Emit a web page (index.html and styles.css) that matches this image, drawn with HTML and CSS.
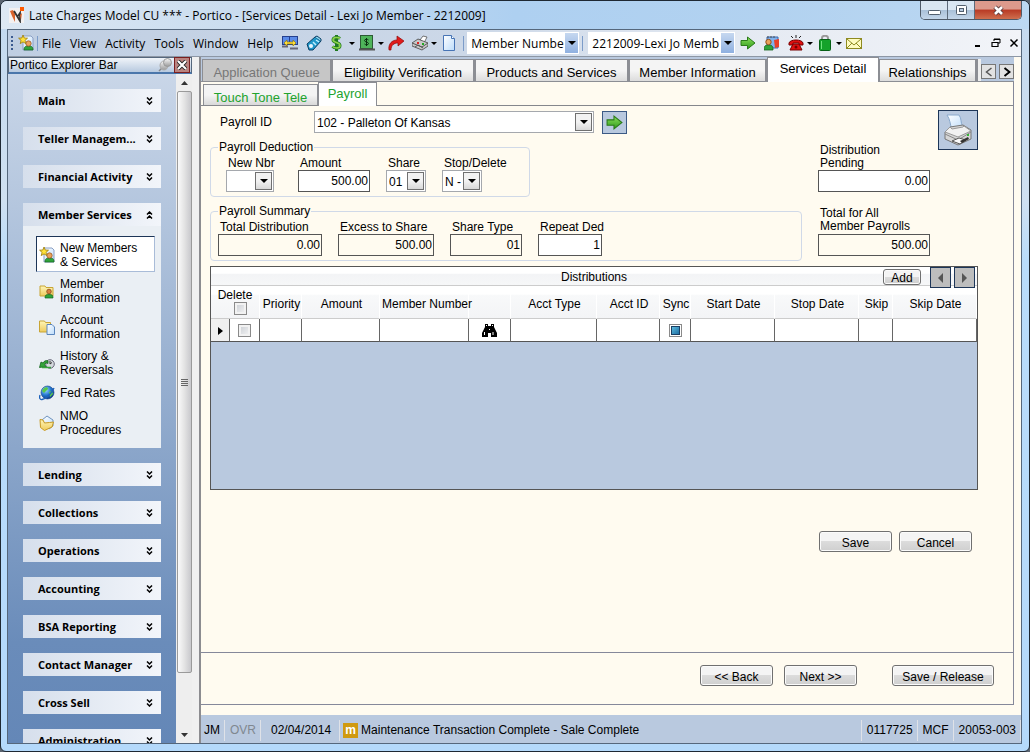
FILE: index.html
```html
<!DOCTYPE html>
<html lang="en">
<head>
<meta charset="utf-8">
<title>Portico - Services Detail</title>
<link rel="stylesheet" href="styles.css">
</head>
<body>
<svg class="defs" aria-hidden="true">
  <defs>
    <linearGradient id="green" x1="0" y1="0" x2="0" y2="1"><stop offset="0" stop-color="#8be05a"/><stop offset="1" stop-color="#2f9a1c"/></linearGradient>
    <linearGradient id="paper" x1="0" y1="0" x2="1" y2="1"><stop offset="0" stop-color="#ffffff"/><stop offset="1" stop-color="#bcdcfb"/></linearGradient>
    <linearGradient id="folder" x1="0" y1="0" x2="0" y2="1"><stop offset="0" stop-color="#fff6b8"/><stop offset="1" stop-color="#eecb5c"/></linearGradient>
    <linearGradient id="grey" x1="0" y1="0" x2="0" y2="1"><stop offset="0" stop-color="#f8f8f8"/><stop offset="1" stop-color="#9a9a9a"/></linearGradient>
    <radialGradient id="globe" cx=".35" cy=".3" r=".8"><stop offset="0" stop-color="#a8ddff"/><stop offset=".5" stop-color="#2579d0"/><stop offset="1" stop-color="#0a2c78"/></radialGradient>
  </defs>
  <symbol id="star-person" viewBox="0 0 16 16">
    <path d="M5 1h8l2 2v12H5z" fill="url(#paper)" stroke="#8a9fc4"/>
    <path d="M6 15c0-3 1-4 4.500-4s4.500 1 4.500 4z" fill="#2fa33a" stroke="#16641f" stroke-width=".7"/>
    <circle cx="10.500" cy="8.500" r="2.700" fill="#e9a25c" stroke="#95521c" stroke-width=".7"/>
    <path d="M5 0l1.300 3 3.200.2-2.500 2.200.9 3.200L5 6.900 2.200 8.600l.9-3.200L.6 3.200 3.800 3z" fill="#ffe23a" stroke="#9a7a08" stroke-width=".8"/>
  </symbol>
  <symbol id="folder-person" viewBox="0 0 16 16">
    <path d="M1 3h5l1 1.500h7V13H1z" fill="url(#folder)" stroke="#c8a534"/>
    <path d="M6 15c0-3 1-3.500 4-3.500s4 .5 4 3.500z" fill="#2fa33a" stroke="#16641f" stroke-width=".7"/>
    <circle cx="10" cy="8.500" r="2.300" fill="#d9803c" stroke="#7b3f14" stroke-width=".7"/>
  </symbol>
  <symbol id="folder-page" viewBox="0 0 16 16">
    <path d="M.5 2h5l1 1.500h5V13H.5z" fill="url(#folder)" stroke="#c8a534"/>
    <path d="M8 5.500h5l2.500 2.500v7.500H8z" fill="url(#paper)" stroke="#5b86bd"/>
  </symbol>
  <symbol id="history" viewBox="0 0 16 16">
    <circle cx="11" cy="9" r="4.300" fill="#d4d9dd" stroke="#667"/>
    <path d="M11 6v3l2-1.500" fill="none" stroke="#333"/>
    <path d="M9 6c-2-1-4 0-5 2L2 7 .5 12.500 7 11.500 5.500 9.500C6 8 7.500 7.500 9 8.500z" fill="#34a53a" stroke="#14641d" stroke-width=".8"/>
    <path d="M3 12.500h9" stroke="#34a53a" stroke-width="1.500"/>
  </symbol>
  <symbol id="globe-icon" viewBox="0 0 16 16">
    <circle cx="8.500" cy="7.500" r="6.500" fill="url(#globe)" stroke="#123f8a" stroke-width=".6"/>
    <path d="M5 3c2-1 4-1 4 1L7 6 5 8 3 6zM10 7l3-1 1 3-3 3z" fill="#58c84a"/>
    <path d="M1 10c-1 3 0 5 2 4.500 4-1 10-6 12-11.500" fill="none" stroke="#1d62bb" stroke-width="1.300"/>
  </symbol>
  <symbol id="folder-open" viewBox="0 0 16 16">
    <path d="M3 5l5-4 6 4v6l-4 3z" fill="url(#paper)" stroke="#6f93bd"/>
    <path d="M1 4.500l3 .5 1.500 3 5-.5L14.500 7 13 12l-7.500 3.500-4-3z" fill="url(#folder)" stroke="#c89a24"/>
  </symbol>
  <symbol id="arrow-right" viewBox="0 0 16 16">
    <path d="M1 5.500h6.500V2L15 8l-7.500 6v-3.500H1z" fill="url(#green)" stroke="#2b7a1a"/>
  </symbol>
</svg>

<div class="window">
  <header class="titlebar">
    <svg class="app-icon" viewBox="0 0 16 16"><rect y="1" width="15" height="15" fill="#f3f1f1"/><path d="M1 4l3-1 2 4v8L3 9z" fill="#d9632c"/><path d="M5 4l6 10V6l-2 3" fill="none" stroke="#333" stroke-width="1.800"/><path d="M11 8l2-2-1 7z" fill="#d9632c"/><rect x="11" width="4" height="4" fill="#ff5a00"/></svg>
    <h1 class="title">Late Charges Model CU *** - Portico - [Services Detail - Lexi Jo Member - 2212009]</h1>
    <div class="win-buttons">
      <button class="win-btn" aria-label="Minimize"><svg width="13" height="13" viewBox="0 0 13 13"><rect x=".5" y="6.500" width="12" height="4" rx="1" fill="#fff" stroke="#53606e"/></svg></button>
      <button class="win-btn" aria-label="Restore"><svg width="13" height="13" viewBox="0 0 13 13"><rect x="1.500" y="1.500" width="10" height="9" rx="1" fill="#fff" stroke="#53606e"/><rect x="4.500" y="4.500" width="4" height="3" fill="#b8cbe0" stroke="#53606e"/></svg></button>
      <button class="win-btn win-close" aria-label="Close"><svg width="13" height="13" viewBox="0 0 13 13"><path d="M3 3l7 7M10 3l-7 7" stroke="#5a3a3a" stroke-width="4.500"/><path d="M3 3l7 7M10 3l-7 7" stroke="#fff" stroke-width="2.600"/></svg></button>
    </div>
  </header>

  <div class="client">
    <div class="menubar">
      <span class="grip"></span>
      <button class="tool" aria-label="New member"><svg viewBox="0 0 16 16"><use href="#star-person"/></svg></button>
      <span class="sep"></span>
      <nav class="menu">
        <button>File</button><button>View</button><button>Activity</button><button>Tools</button><button>Window</button><button>Help</button>
      </nav>
      <div class="tools">
        <button class="tool" aria-label="Connections"><svg viewBox="0 0 16 16"><rect x=".5" y="1.500" width="8" height="8" fill="#5b8be8" stroke="#25408e"/><rect x="7.500" y="1.500" width="8" height="8" fill="#5b8be8" stroke="#25408e"/><path d="M8 13.500h8M0 11.500h6" stroke="#667" stroke-width="2"/><path d="M2 8l3-3v2h6V5l3 3-3 3V9H5v2z" fill="#ffe03a" stroke="#8a6d00" stroke-width=".6"/></svg></button>
        <button class="tool" aria-label="Calculator"><svg viewBox="0 0 16 16"><path d="M1 9l8-7 6 4-8 9H3z" fill="#1f97c9" stroke="#0b3f66"/><path d="M9 2l2-1 4 3v2" fill="#8bd8f2" stroke="#0b3f66"/><circle cx="5" cy="11" r="2" fill="#e7f6ff"/><path d="M7 7l3 3M10 5l3 2" stroke="#bfefff" stroke-width="1.500"/></svg></button>
        <button class="tool drop" aria-label="Money"><svg viewBox="0 0 16 16"><path d="M10 3.500C8 2 3 2 3 5s7 2 7 5.500-5.500 3-7.500 1M6.500 0v16" fill="none" stroke="#1f7a1f" stroke-width="3"/><path d="M10 3.500C8 2 3 2 3 5s7 2 7 5.500-5.500 3-7.500 1" fill="none" stroke="#8fd44a" stroke-width="1.600"/></svg></button>
        <button class="tool drop" aria-label="Cash"><svg viewBox="0 0 16 16"><rect x="1.500" y=".5" width="12" height="13" fill="#4fb45a" stroke="#2c5a35"/><path d="M0 14.500h16" stroke="#555" stroke-width="2"/><path d="M9.500 5c-1-1-4-1-4 .6s4 1.200 4 2.900-3 1.600-4 .5M7.500 3v8" fill="none" stroke="#0a3010"/></svg></button>
        <button class="tool" aria-label="Forward"><svg viewBox="0 0 16 16"><path d="M1 15c-1-6 3-10 8-10V1l7 5-6 5V8C6 8 3 10 3 15z" fill="#e21b1b" stroke="#8e0a0a" stroke-width=".7"/></svg></button>
        <button class="tool drop" aria-label="Print"><svg viewBox="0 0 16 16"><path d="M8 5l3-4 4 1-3 6z" fill="#fff" stroke="#555" stroke-width=".8"/><path d="M0 8l6-4 10 4v3l-6 4-10-4z" fill="#c8c8c8" stroke="#444" stroke-width=".8"/><path d="M0 8l10 4 6-4M3 12l3-2 5 3" fill="none" stroke="#555"/><path d="M5 8h2" stroke="#d22" stroke-width="2"/><path d="M10 9h2" stroke="#2a2" stroke-width="2"/></svg></button>
        <button class="tool" aria-label="Document"><svg viewBox="0 0 16 16"><path d="M2.500.5h8l3 3v12h-11z" fill="url(#paper)" stroke="#4774b5"/><path d="M10.500.5v3h3" fill="#fff" stroke="#4774b5"/></svg></button>
      </div>
      <span class="sep"></span>
      <span class="combo combo-flat search-type"><select aria-label="Search by"><option>Member Numbe</option></select><i></i></span>
      <span class="sep"></span>
      <span class="combo combo-flat search-member"><select aria-label="Member"><option>2212009-Lexi Jo Memb</option></select><i></i></span>
      <div class="tools">
        <button class="tool" aria-label="Go"><svg viewBox="0 0 16 16"><use href="#arrow-right"/></svg></button>
        <button class="tool" aria-label="Member notes"><svg viewBox="0 0 16 16"><path d="M3 2h11v11H3z" fill="#7fb2ee" stroke="#3a68ad"/><path d="M4 1v2M7 1v2M10 1v2" stroke="#555"/><path d="M10 5l5-1v8l-4 1z" fill="#e8402a"/><path d="M0 15c0-4 1-5 4.500-5S9 11 9 15z" fill="#2fa33a" stroke="#16641f" stroke-width=".8"/><circle cx="4.500" cy="7" r="2.700" fill="#e9a25c" stroke="#95521c"/></svg></button>
        <button class="tool drop" aria-label="Phone"><svg viewBox="0 0 16 16"><path d="M1 8c1-4 13-4 14 0v2h-4V8H5v2H1z" fill="#e01010" stroke="#700"/><path d="M5 9h6l3 6H2z" fill="#e01010" stroke="#700"/><path d="M5 3L3 1M8 3V0M11 3l2-2" stroke="#222"/><circle cx="8" cy="12" r="1.500" fill="#700"/></svg></button>
        <button class="tool drop" aria-label="Security"><svg viewBox="0 0 16 16"><path d="M5 5V3c0-3 6-3 6 0v2" fill="none" stroke="#999" stroke-width="2"/><rect x="2.500" y="4.500" width="11" height="11" rx="1" fill="#14a32a" stroke="#066016"/><path d="M4.500 6v8" stroke="#6fe27d"/></svg></button>
        <button class="tool" aria-label="Mail"><svg viewBox="0 0 16 16"><rect x=".5" y="3.500" width="15" height="10" fill="#fffcc0" stroke="#8e8a20"/><path d="M1 4l7 6 7-6M1 13l5-5M15 13l-5-5" fill="none" stroke="#8e8a20"/></svg></button>
      </div>
      <div class="mdi">
        <button aria-label="Minimize child"><svg width="10" height="10" viewBox="0 0 10 10"><path d="M2 8h5" stroke="#000" stroke-width="2"/></svg></button>
        <button aria-label="Restore child"><svg width="10" height="10" viewBox="0 0 10 10"><path d="M3 3V1h6v4H7M3 1.500h6" fill="none" stroke="#000"/><path d="M1 4.500h6v4H1zM1 4.500h6" fill="none" stroke="#000" stroke-width="1.200"/></svg></button>
        <button aria-label="Close child"><svg width="10" height="10" viewBox="0 0 10 10"><path d="M1.500 1.500l7 7M8.500 1.500l-7 7" stroke="#000" stroke-width="1.500"/></svg></button>
      </div>
    </div>

    <div class="workspace">
      <aside class="explorer">
        <div class="explorer-head">
          <h2>Portico Explorer Bar</h2>
          <button class="pin" aria-label="Pin"><svg width="14" height="14" viewBox="0 0 14 14"><path d="M1 13l4-4" stroke="#888" stroke-width="1.500"/><ellipse cx="6" cy="7.500" rx="4" ry="4.500" fill="url(#grey)" stroke="#aaa"/><circle cx="9.500" cy="4.500" r="4" fill="url(#grey)" stroke="#999"/></svg></button>
          <button class="explorer-close" aria-label="Close explorer bar"><svg width="10" height="10" viewBox="0 0 10 10"><path d="M1 1l8 8M9 1L1 9" stroke="#222" stroke-width="4"/><path d="M1 1l8 8M9 1L1 9" stroke="#fff" stroke-width="2.200"/></svg></button>
        </div>
        <div class="explorer-body">
          <nav class="groups">
            <button class="group">Main<svg class="chev" viewBox="0 0 7 8"><path d="M1 .5l2.500 2.500L6 .5M1 4.500l2.500 2.500L6 4.500"/></svg></button>
            <button class="group">Teller Managem...<svg class="chev" viewBox="0 0 7 8"><path d="M1 .5l2.500 2.500L6 .5M1 4.500l2.500 2.500L6 4.500"/></svg></button>
            <button class="group">Financial Activity<svg class="chev" viewBox="0 0 7 8"><path d="M1 .5l2.500 2.500L6 .5M1 4.500l2.500 2.500L6 4.500"/></svg></button>
            <section>
              <button class="group">Member Services<svg class="chev up" viewBox="0 0 7 8"><path d="M1 .5l2.500 2.500L6 .5M1 4.500l2.500 2.500L6 4.500"/></svg></button>
              <ul class="links">
                <li><a href="#" class="active"><svg viewBox="0 0 16 16"><use href="#star-person"/></svg><span>New Members<br>&amp; Services</span></a></li>
                <li><a href="#"><svg viewBox="0 0 16 16"><use href="#folder-person"/></svg><span>Member<br>Information</span></a></li>
                <li><a href="#"><svg viewBox="0 0 16 16"><use href="#folder-page"/></svg><span>Account<br>Information</span></a></li>
                <li><a href="#"><svg viewBox="0 0 16 16"><use href="#history"/></svg><span>History &amp;<br>Reversals</span></a></li>
                <li><a href="#"><svg viewBox="0 0 16 16"><use href="#globe-icon"/></svg><span>Fed Rates</span></a></li>
                <li><a href="#"><svg viewBox="0 0 16 16"><use href="#folder-open"/></svg><span>NMO<br>Procedures</span></a></li>
              </ul>
            </section>
            <button class="group">Lending<svg class="chev" viewBox="0 0 7 8"><path d="M1 .5l2.500 2.500L6 .5M1 4.500l2.500 2.500L6 4.500"/></svg></button>
            <button class="group">Collections<svg class="chev" viewBox="0 0 7 8"><path d="M1 .5l2.500 2.500L6 .5M1 4.500l2.500 2.500L6 4.500"/></svg></button>
            <button class="group">Operations<svg class="chev" viewBox="0 0 7 8"><path d="M1 .5l2.500 2.500L6 .5M1 4.500l2.500 2.500L6 4.500"/></svg></button>
            <button class="group">Accounting<svg class="chev" viewBox="0 0 7 8"><path d="M1 .5l2.500 2.500L6 .5M1 4.500l2.500 2.500L6 4.500"/></svg></button>
            <button class="group">BSA Reporting<svg class="chev" viewBox="0 0 7 8"><path d="M1 .5l2.500 2.500L6 .5M1 4.500l2.500 2.500L6 4.500"/></svg></button>
            <button class="group">Contact Manager<svg class="chev" viewBox="0 0 7 8"><path d="M1 .5l2.500 2.500L6 .5M1 4.500l2.500 2.500L6 4.500"/></svg></button>
            <button class="group">Cross Sell<svg class="chev" viewBox="0 0 7 8"><path d="M1 .5l2.500 2.500L6 .5M1 4.500l2.500 2.500L6 4.500"/></svg></button>
            <button class="group">Administration<svg class="chev" viewBox="0 0 7 8"><path d="M1 .5l2.500 2.500L6 .5M1 4.500l2.500 2.500L6 4.500"/></svg></button>
          </nav>
          <div class="scroll" aria-hidden="true">
            <span class="scroll-arrow"><svg width="7" height="4" viewBox="0 0 7 4"><path d="M0 4l3.500-4L7 4z" fill="#333"/></svg></span>
            <span class="thumb"><i></i><i></i><i></i><i></i></span>
            <span class="scroll-arrow last"><svg width="7" height="4" viewBox="0 0 7 4"><path d="M0 0l3.500 4L7 0z" fill="#333"/></svg></span>
          </div>
        </div>
      </aside>

      <main class="main">
        <div class="tabs">
          <button class="tab w-queue muted">Application Queue</button>
          <button class="tab w-elig">Eligibility Verification</button>
          <button class="tab w-prod">Products and Services</button>
          <button class="tab w-info">Member Information</button>
          <button class="tab w-detail current">Services Detail</button>
          <button class="tab w-rel">Relationships</button>
          <span class="tab-cut"></span>
          <div class="tab-nav">
            <button aria-label="Scroll tabs left"><svg width="8" height="10" viewBox="0 0 8 10"><path d="M6.500 1l-5 4 5 4" fill="none" stroke="#555" stroke-width="1.500"/></svg></button>
            <button aria-label="Scroll tabs right"><svg width="8" height="10" viewBox="0 0 8 10"><path d="M1.500 1l5 4-5 4" fill="none" stroke="#000" stroke-width="2"/></svg></button>
          </div>
        </div>

        <div class="page">
          <div class="subtabs">
            <button class="subtab">Touch Tone Tele</button>
            <button class="subtab current">Payroll</button>
          </div>

          <form class="content">
            <div class="top">
              <div class="left">
                <div class="payroll-row">
                  <label for="payroll">Payroll ID</label>
                  <span class="combo combo-payroll"><select id="payroll"><option>102 - Palleton Of Kansas</option></select><i></i></span>
                  <button type="button" class="icon-btn" aria-label="Go to payroll"><svg viewBox="0 0 16 16"><use href="#arrow-right"/></svg></button>
                </div>
                <fieldset class="box deduction">
                  <legend>Payroll Deduction</legend>
                  <div class="fields">
                    <div class="field w48 wide-gap"><label for="nbr">New Nbr</label><span class="combo"><select id="nbr"><option></option></select><i></i></span></div>
                    <div class="field w72"><label for="amount">Amount</label><input id="amount" value="500.00"></div>
                    <div class="field w40"><label for="share">Share</label><span class="combo"><select id="share"><option>01</option></select><i></i></span></div>
                    <div class="field w40"><label for="stop">Stop/Delete</label><span class="combo"><select id="stop"><option>N -</option></select><i></i></span></div>
                  </div>
                </fieldset>
                <fieldset class="box">
                  <legend>Payroll Summary</legend>
                  <div class="fields summary">
                    <div class="field w104"><label for="total">Total Distribution</label><input id="total" class="ro" value="0.00" readonly></div>
                    <div class="field w96"><label for="excess">Excess to Share</label><input id="excess" class="ro" value="500.00" readonly></div>
                    <div class="field w72"><label for="type">Share Type</label><input id="type" class="ro" value="01" readonly></div>
                    <div class="field w64"><label for="repeat">Repeat Ded</label><input id="repeat" value="1"></div>
                  </div>
                </fieldset>
              </div>
              <div class="right">
                <div class="pending">
                  <label for="pending">Distribution<br>Pending</label>
                  <button type="button" class="print" aria-label="Print"><svg width="32" height="34" viewBox="0 0 32 34"><path d="M5 2l12 0c3 4 1 7 4 12L10 17C8 11 8 6 5 2z" fill="url(#paper)" stroke="#8aa9cc"/><path d="M3 19l5-5 13-2 8 5v9l-13 6-13-6z" fill="#d6d6d6" stroke="#777"/><path d="M3 19l5-5 2 2 11-2 1-1 7 5-13 6z" fill="#f1f1f1" stroke="#999"/><path d="M3 21l13 6 13-8" fill="none" stroke="#888"/><path d="M10 28l7-3 7 2-6 4z" fill="#fafafa" stroke="#555"/><path d="M18 28l8-4 1 2-7 4z" fill="#333"/><rect x="25" y="21" width="2" height="2" fill="#35b535"/></svg></button>
                </div>
                <input id="pending" class="total-in" value="0.00">
                <label for="all" class="all-label">Total for All<br>Member Payrolls</label>
                <input id="all" class="total-in ro" value="500.00" readonly>
              </div>
            </div>

            <div class="grid">
              <div class="grid-bar">
                <span></span>
                <strong>Distributions</strong>
                <div class="grid-tools">
                  <button type="button" class="btn add">Add</button>
                  <button type="button" class="page-btn" aria-label="Previous"><svg width="5" height="10" viewBox="0 0 5 10"><path d="M5 0v10L0 5z" fill="#555"/></svg></button>
                  <button type="button" class="page-btn" aria-label="Next"><svg width="5" height="10" viewBox="0 0 5 10"><path d="M0 0v10l5-5z" fill="#555"/></svg></button>
                </div>
              </div>
              <table>
                <colgroup><col class="c19"><col class="c30"><col class="c42"><col class="c78"><col class="c89"><col class="c42"><col class="c86"><col class="c63"><col class="c31"><col class="c84"><col class="c84"><col class="c34"><col class="c84"></colgroup>
                <thead>
                  <tr><th colspan="2" class="del"><label for="delall">Delete</label><input type="checkbox" id="delall"></th><th>Priority</th><th>Amount</th><th>Member Number</th><th></th><th>Acct Type</th><th>Acct ID</th><th>Sync</th><th>Start Date</th><th>Stop Date</th><th>Skip</th><th>Skip Date</th></tr>
                </thead>
                <tbody>
                  <tr><td class="marker"><svg width="5" height="8" viewBox="0 0 5 8"><path d="M0 0v8l5-4z"/></svg></td><td><input type="checkbox" aria-label="Delete row"></td><td></td><td></td><td></td><td><svg width="15" height="13" viewBox="0 0 15 13"><path d="M3 0h3v2h3V0h3v3l3 6v4H9V9H6v4H0V9l3-6z"/><path d="M2.500 8v3M11 8v3M4.500 1v1M10.500 1v1M7.500 5v1" stroke="#fff"/></svg></td><td></td><td></td><td><input type="checkbox" checked aria-label="Sync"></td><td></td><td></td><td></td><td></td></tr>
                </tbody>
              </table>
            </div>

            <div class="actions">
              <button type="button" class="btn">Save</button>
              <button type="button" class="btn">Cancel</button>
            </div>
          </form>

          <footer class="wizard">
            <button class="btn">&lt;&lt; Back</button>
            <button class="btn">Next &gt;&gt;</button>
            <button class="btn release">Save / Release</button>
          </footer>
        </div>

        <div class="status">
          <span>JM</span>
          <span class="dim">OVR</span>
          <span class="date">02/04/2014</span>
          <span class="message"><b class="m-icon">m</b>Maintenance Transaction Complete - Sale Complete</span>
          <span>0117725</span>
          <span>MCF</span>
          <span>20053-003</span>
        </div>
      </main>
    </div>
  </div>
</div>
</body>
</html>
```
FILE: styles.css
```css
* { box-sizing: border-box; }
body { margin: 0; background: #5b6470; font-family: "Liberation Sans", Arial, sans-serif; font-size: 12px; color: #000; }
button, input, select { font: inherit; color: inherit; margin: 0; padding: 0; border-radius: 0; }
button { background: none; border: 0; }
h1, h2, ul { margin: 0; padding: 0; font-weight: normal; list-style: none; }
.defs { position: absolute; width: 0; height: 0; }

/* window frame */
.window {
  height: 100vh; display: flex; flex-direction: column; overflow: hidden;
  padding: 0 7px 7px 6px; border: 1px solid #1e2833; border-radius: 7px 7px 6px 6px;
  background: linear-gradient(#c3d9ef 0, #cfe0f1 200px, #b9dcfb 260px, #b4d9fb);
}
.titlebar {
  height: 28px; flex: none; display: flex; align-items: center; gap: 4px;
  margin: 0 -7px 0 -6px; padding: 0 7px 0 8px;
  background: linear-gradient(90deg, #dde8f3, #c4d9ee 30%, #aed0f1 50%, #b2d2f0 75%, #bcd8f2);
}
.app-icon { width: 16px; height: 16px; }
.title { flex: 1; font: 12px "Open Sans", "Noto Sans", sans-serif; white-space: nowrap; }
.win-buttons { align-self: flex-start; display: flex; border: 1px solid #4e5a68; border-top: 0; border-radius: 0 0 5px 5px; overflow: hidden; }
.win-btn { width: 27px; height: 18px; display: grid; place-items: center; background: linear-gradient(#d9e6f2 50%, #a9c0d8 50%, #c3d6e9); border-right: 1px solid #5c6a7a; }
.win-close { width: 46px; border-right: 0; background: linear-gradient(#dc9a8c 45%, #b83a24 50%, #cf6f4e); }
.client { flex: 1; min-height: 0; display: flex; flex-direction: column; border: 1px solid #55677c; background: #f0f0f0; }

/* menu and toolbar */
.menubar { height: 27px; flex: none; display: flex; align-items: center; padding: 0 2px 0 3px; background: linear-gradient(90deg, #bfcee2, #ccd8e8 45%, #e6ebf3 75%, #f2f4f8); font-family: "Open Sans", "Noto Sans", sans-serif; border-bottom: 1px solid #8d97a5; }
.grip { width: 2px; height: 14px; margin-right: 2px; background: repeating-linear-gradient(#3a5a90 0 2px, transparent 2px 4px); }
.sep { width: 1px; height: 15px; margin: 0 3px 0 0; background: #7c9cc9; }
.menu { display: flex; gap: 9px; padding: 0 6px 0 1px; }
.tools { display: flex; gap: 2px; padding-right: 3px; }
.tool { width: 22px; height: 20px; display: flex; align-items: center; padding: 0 3px; }
.tool svg { width: 16px; height: 16px; flex: none; }
.drop { width: 27px; gap: 3px; }
.drop::after { content: ""; border: 3px solid transparent; border-top-color: #000; border-bottom: 0; flex: none; }
.mdi { margin-left: auto; display: flex; gap: 8px; }
.mdi svg { display: block; }

/* drop-downs */
.combo { display: grid; height: 22px; border: 1px solid #a5a8ad; background: #fff; }
.combo select { grid-area: 1 / 1; appearance: none; border: 0; background: transparent; padding: 2px 0 0 2px; min-width: 0; }
.combo i { grid-area: 1 / 1; justify-self: end; align-self: center; pointer-events: none; width: 17px; height: 18px; margin-right: 1px; display: grid; place-items: center; border: 1px solid #707070; background: linear-gradient(#f2f2f2 50%, #d8d8d8); }
.combo i::after { content: ""; border: 4px solid transparent; border-top-color: #000; border-bottom: 0; }
.combo-flat { height: 22px; border: 0; }
.combo-flat select { padding: 0 0 0 4px; }
.combo-flat i { border: 0; width: 13px; height: 20px; background: linear-gradient(#c6d8f0, #8fb0e0); }
.search-type { width: 112px; margin-right: 3px; }
.search-member { width: 147px; margin: 0 2px; }

/* explorer */
.workspace { flex: 1; min-height: 0; display: flex; }
.explorer { width: 184px; flex: none; display: flex; flex-direction: column; margin-right: 7px; }
.explorer-head { height: 17px; flex: none; display: flex; align-items: center; gap: 2px; padding: 0 1px; background: linear-gradient(#f0f4f9, #b7c9df); border: 1px solid #55677c; border-bottom: 2px solid #4a76ab; }
.explorer-head h2 { flex: 1; font-size: 12px; }
.pin svg, .explorer-close svg { display: block; }
.explorer-close { padding: 2px; background: #b9837f; border: 1px solid #7b1f1f; }
.explorer-body { flex: 1; min-height: 0; display: flex; overflow: hidden; }
.groups { flex: 1; display: flex; flex-direction: column; gap: 15px; padding: 15px; background: linear-gradient(#c9d6e8, #b4c6de 20%, #6a8cba 85%, #6487b7); overflow: hidden; }
.group { width: 100%; height: 23px; flex: none; display: flex; align-items: center; justify-content: space-between; padding: 0 8px 0 15px; background: linear-gradient(90deg, #d6dfec, #f2f5fa); font: bold 11px "Open Sans", "Noto Sans", sans-serif; text-align: left; }
.chev { width: 7px; height: 8px; fill: none; stroke: #000; stroke-width: 1.5; }
.up { transform: rotate(180deg); }
.links { padding: 10px 6px 8px 13px; background: #eaeff4; line-height: 14px; }
.links a { display: flex; align-items: center; gap: 5px; padding: 4px 2px 2px; border: 1px solid transparent; color: #000; text-decoration: none; }
.links .active { background: #fff; border-color: #1d3557 #a9bcd8 #a9bcd8 #1d3557; }
.links svg { width: 16px; height: 16px; flex: none; }
.scroll { width: 16px; flex: none; display: flex; flex-direction: column; align-items: center; background: #eee; }
.scroll-arrow { height: 17px; display: grid; place-items: center; }
.thumb { flex: 1; width: 15px; display: flex; flex-direction: column; align-items: center; justify-content: center; gap: 1px; border: 1px solid #9a9a9a; border-radius: 2px; background: linear-gradient(90deg, #fafafa, #e3e3e3 50%, #c8c8cc); }
.thumb i { width: 7px; height: 1px; background: #666; }
.last { margin-top: 53px; }

/* main tabs */
.main { flex: 1; min-width: 0; display: flex; flex-direction: column; background: #fffbf0; border-left: 2px solid #8c8c90; }
.tabs { height: 25px; flex: none; display: flex; align-items: flex-end; margin-right: 7px; padding-left: 1px; background: #b9c9df; border-bottom: 1px solid #8c8e94; }
.tab { height: 22px; min-width: 0; border: 1px solid #8c8e94; border-bottom: 0; border-right-width: 2px; background: linear-gradient(#f4f4f4 50%, #dcdcdc); font-size: 13px; white-space: nowrap; padding-top: 4px; }
.tab.muted { background: #c6c6c6; color: #777; }
.tab.current { height: 25px; margin-bottom: -1px; background: #fff; border-right-width: 1px; padding: 0 0 4px; }
.w-queue { flex: 0 1 130px; }
.w-elig { flex: 0 1 143px; }
.w-prod { flex: 0 1 154px; }
.w-info { flex: 0 1 138px; }
.w-detail { flex: 0 1 112px; }
.w-rel { flex: 0 1 98px; }
.tab-cut { width: 4px; height: 22px; border-left: 1px solid #8c8e94; background: #eee; }
.tab-nav { display: flex; gap: 3px; margin-left: auto; padding-bottom: 2px; }
.tab-nav button { width: 15px; height: 15px; display: grid; place-items: center; border: 1px solid #777; background: #e2e2e2; }

/* page */
.page { flex: 1; min-height: 0; display: flex; flex-direction: column; margin: 0 7px 10px 0; border-right: 1px solid #85889a; border-bottom: 1px solid #85889a; }
.subtabs { height: 24px; flex: none; display: flex; align-items: flex-end; padding-left: 2px; border-bottom: 1px solid #85878c; }
.subtab { width: 115px; height: 21px; border: 1px solid #8c8e94; border-bottom: 0; background: linear-gradient(#f4f4f4 50%, #d9d9d9); color: #22a32f; font-size: 13px; padding-top: 4px; white-space: nowrap; }
.subtab.current { width: 59px; height: 24px; margin-bottom: -1px; background: #fff; padding: 0 0 3px; }
.content { flex: 1; padding: 4px 35px 0 9px; border-bottom: 1px solid #85889a; }
.top { display: grid; grid-template-columns: 1fr 160px; gap: 16px; }
.left { display: flex; flex-direction: column; gap: 8px; padding-top: 1px; }
.payroll-row { display: flex; align-items: center; padding-left: 10px; }
.payroll-row label { width: 94px; }
.payroll-row .combo { width: 280px; }
.icon-btn { width: 25px; height: 23px; margin: 0 0 -1px 8px; display: grid; place-items: center; border: 1px solid #3c5a85; background: #b9c9df; }
.icon-btn svg { width: 17px; height: 17px; }
.box { min-width: 0; margin: 0; padding: 4px 0 4px 7px; border: 1px solid #d0d9e8; border-radius: 4px; }
.deduction { width: 320px; padding-left: 15px; }
.box legend { padding: 0 1px; line-height: 12px; }
.deduction legend { margin-left: -8px; }
.fields { display: flex; gap: 16px; }
.field { display: flex; flex-direction: column; gap: 1px; line-height: 12px; }
.field label { padding-left: 2px; white-space: nowrap; }
.wide-gap { margin-right: 8px; }
.w40 { width: 40px; }
.w48 { width: 48px; }
.w64 { width: 64px; }
.w72 { width: 72px; }
.w96 { width: 96px; }
.w104 { width: 104px; }
.field input, .total-in { width: 100%; height: 22px; border: 1px solid #555; background: #fff; text-align: right; padding: 0 1px; }
.field .ro, .ro { background: #fffbf0; }
.right { display: flex; flex-direction: column; line-height: 13px; }
.right label { padding-left: 2px; }
.pending { display: flex; justify-content: space-between; height: 60px; }
.pending label { align-self: flex-end; }
.print { width: 40px; height: 40px; display: grid; place-items: center; border: 1px solid #1d3557; background: #b9c9df; }
.right .total-in { width: 112px; }
.all-label { margin: 15px 0 1px; }

/* distributions grid */
.grid { min-height: 224px; margin-top: 5px; border: 1px solid #555; background: #b9c9df; }
.grid-bar { height: 19px; display: grid; grid-template-columns: 1fr auto 1fr; align-items: center; background: linear-gradient(#fff 35%, #f3f4f6 40%, #f6f7f8); border-bottom: 1px solid #ccc; }
.grid-bar strong { font-weight: normal; }
.grid-tools { display: flex; justify-content: flex-end; align-items: center; gap: 3px; padding-right: 2px; }
.page-btn { width: 21px; height: 21px; margin-bottom: -2px; display: grid; place-items: center; border: 1px solid #1d3557; background: #bdbdbd; }
table { width: 100%; table-layout: fixed; border-collapse: separate; border-spacing: 0; }
th { height: 33px; padding: 3px 0 0 2px; font-weight: normal; white-space: nowrap; background: linear-gradient(#fff 25%, #f8f9fa 30%, #f3f4f6); border-right: 1px solid #fff; border-bottom: 1px solid #ccc; }
th.del { padding: 0; line-height: 12px; }
.del label { display: block; }
.del input { margin: 0 0 0 10px; }
td { height: 23px; padding: 0; text-align: center; background: #fff; border-right: 1px solid #666; border-bottom: 1px solid #555; }
td svg, td input, .del input { display: inline-block; vertical-align: middle; }
td.marker { background: #f0f0f0; }
.c19 { width: 19px; }
.c30 { width: 30px; }
.c31 { width: 31px; }
.c34 { width: 34px; }
.c42 { width: 42px; }
.c63 { width: 63px; }
.c78 { width: 78px; }
.c84 { width: 84px; }
.c86 { width: 86px; }
.c89 { width: 89px; }
input[type=checkbox] { appearance: none; width: 13px; height: 13px; border: 1px solid #8a8a8a; background: linear-gradient(135deg, #c8ccd2, #f6f6f6); box-shadow: inset 0 0 0 2px #f2f2f2; }
input[type=checkbox]:checked { background: linear-gradient(135deg, #6fd0ee, #0c5a94); box-shadow: inset 0 0 0 1px #fff, inset 0 0 0 2px #1b3f63; }

/* buttons */
.btn { width: 73px; height: 21px; border: 1px solid #707070; border-radius: 3px; background: linear-gradient(#f4f4f4 50%, #dcdcdc 50%, #cfcfcf); box-shadow: inset 0 0 0 1px #fbfbfb; padding-top: 2px; }
.add { width: 38px; height: 16px; margin-right: 6px; line-height: 13px; }
.actions { display: flex; justify-content: flex-end; gap: 7px; padding: 41px 6px 0 0; }
.wizard { height: 51px; flex: none; display: flex; justify-content: flex-end; gap: 11px; padding: 12px 19px 0 0; }
.release { width: 102px; margin-left: 24px; }

/* status bar */
.status { height: 28px; flex: none; display: flex; align-items: center; padding-top: 2px; background: #b9c9df; }
.status > span { height: 21px; display: flex; align-items: center; padding: 0 4px 0 5px; border-right: 1px solid #dfe2e8; white-space: nowrap; }
.status > span:first-child { padding-left: 3px; }
.status .dim { color: #808890; }
.status .date { padding: 0 8px 0 10px; }
.status .message { flex: 1; gap: 3px; padding-left: 3px; }
.m-icon { width: 15px; height: 15px; display: grid; place-items: center; background: #d09a10; color: #fff; line-height: 12px; }
```
